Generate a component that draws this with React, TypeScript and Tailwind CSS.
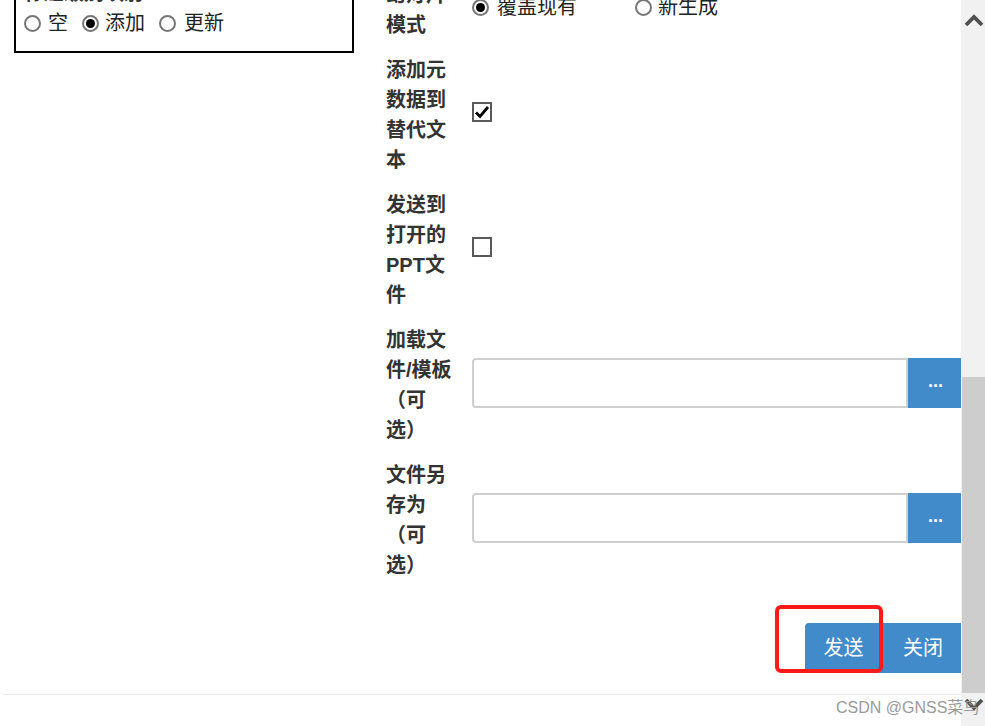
import React from 'react';

const FONT = { fontFamily: '"Liberation Sans", "Noto Sans CJK SC", sans-serif' };

function Radio({ checked }: { checked?: boolean }) {
  return (
    <span className="w-[17px] h-[17px] rounded-full border-2 border-[#767676] bg-white flex items-center justify-center flex-shrink-0">
      {checked && <span className="w-[9px] h-[9px] rounded-full bg-black" />}
    </span>
  );
}

function Checkbox({ checked }: { checked?: boolean }) {
  return (
    <span className="w-[20px] h-[20px] border-2 border-[#5a5a5a] bg-white flex items-center justify-center">
      {checked && (
        <svg width="16" height="16" viewBox="0 0 16 16">
          <path d="M2 8.5 L6 12.5 L14 3" fill="none" stroke="#000" strokeWidth="2.8" />
        </svg>
      )}
    </span>
  );
}

function Label({ lines }: { lines: string[] }) {
  return (
    <div className="w-[86px] flex-shrink-0 font-bold text-[20px] leading-[30px] text-[#333]">
      {lines.map((l, i) => (
        <div key={i} className="whitespace-nowrap">{l}</div>
      ))}
    </div>
  );
}

function FileInput() {
  return (
    <div className="flex h-[50px] w-[491px]">
      <div className="flex-1 border-2 border-[#cfcfcf] rounded-l-[4px] bg-white" />
      <div className="w-[55px] bg-[#428bca] rounded-tr-[3px] flex items-center justify-center text-white font-bold text-[18px] leading-none pb-[4px]">
        ...
      </div>
    </div>
  );
}

export default function App() {
  return (
    <div className="relative w-[985px] h-[726px] overflow-hidden bg-white" style={FONT}>
      <div className="w-[963px] h-[695px] border-b border-[#ececec] rounded-b-[4px] flex">
        {/* 左侧选项框 */}
        <div className="pl-[14px]">
          <div className="w-[340px] h-[83px] -mt-[30px] border-2 border-black pt-[6px] pl-[8px]">
            <div className="font-bold text-[20px] leading-[30px] text-[#333]">标题级别映射</div>
            <div className="flex items-center h-[30px] text-[20px] text-[#222]">
              <Radio />
              <span className="ml-[7px] mr-[14px]">空</span>
              <Radio checked />
              <span className="ml-[6px] mr-[14px]">添加</span>
              <Radio />
              <span className="ml-[8px]">更新</span>
            </div>
          </div>
        </div>

        {/* 右侧表单 */}
        <div className="ml-[32px] -mt-[20px] flex flex-col gap-[15px]">
          <div className="flex items-center">
            <Label lines={['幻灯片', '模式']} />
            <div className="flex items-center text-[20px] text-[#222] -mt-[6px]">
              <div className="w-[163px] flex items-center gap-[8px]">
                <Radio checked />
                <span>覆盖现有</span>
              </div>
              <div className="flex items-center gap-[6px]">
                <Radio />
                <span>新生成</span>
              </div>
            </div>
          </div>

          <div className="flex items-center">
            <Label lines={['添加元', '数据到', '替代文', '本']} />
            <div className="-mt-[6px]">
              <Checkbox checked />
            </div>
          </div>

          <div className="flex items-center">
            <Label lines={['发送到', '打开的', 'PPT文', '件']} />
            <div className="-mt-[6px]">
              <Checkbox />
            </div>
          </div>

          <div className="flex items-center">
            <Label lines={['加载文', '件/模板', '（可', '选）']} />
            <div className="-mt-[4px]">
              <FileInput />
            </div>
          </div>

          <div className="flex items-center">
            <Label lines={['文件另', '存为', '（可', '选）']} />
            <div className="-mt-[4px]">
              <FileInput />
            </div>
          </div>

          <div className="flex justify-end mt-[28px]">
            <button className="w-[78px] h-[50px] bg-[#428bca] text-white text-[20px] rounded-l-[4px] border-r border-[#3a7fbb]">
              发送
            </button>
            <button className="w-[80px] h-[50px] bg-[#428bca] text-white text-[20px]">关闭</button>
          </div>
        </div>
      </div>

      {/* 滚动条 */}
      <div className="absolute right-0 top-0 w-[24px] h-full bg-[#f1f1f1]">
        <div className="absolute left-[1px] right-0 top-[377px] h-[316px] bg-[#cdcdcd]" />
        <svg className="absolute left-[3px] top-[12px]" width="20" height="16" viewBox="0 0 20 16">
          <path d="M2 13 L10 5 L18 13" fill="none" stroke="#505050" strokeWidth="3.8" />
        </svg>
        <svg className="absolute left-[3px] top-[697px]" width="20" height="16" viewBox="0 0 20 16">
          <path d="M2 3 L10 11 L18 3" fill="none" stroke="#505050" strokeWidth="3.8" />
        </svg>
      </div>

      {/* 标注框 */}
      <div className="absolute left-[775px] top-[605px] w-[108px] h-[68px] border-4 border-[#ff1a1a] rounded-[6px]" />

      {/* 水印 */}
      <div className="absolute left-[836px] top-[697px] text-[16px] leading-[22px] text-[#9a9a9a] whitespace-nowrap">
        CSDN @GNSS菜鸟
      </div>
    </div>
  );
}
